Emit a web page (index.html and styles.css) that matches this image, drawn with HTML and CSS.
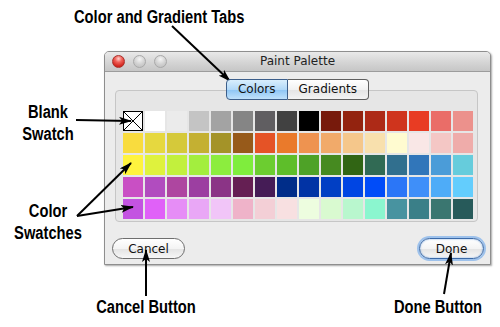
FILE: index.html
```html
<!DOCTYPE html>
<html lang="en">
<head>
    <meta charset="UTF-8">
    <title>Paint Palette</title>
    <link rel="stylesheet" href="styles.css">
</head>
<body>
    <div class="figure">
        <div class="caption caption-top">Color and Gradient Tabs</div>

        <div class="stage">
            <div class="side">
                <div class="caption side-blank">Blank<br>Swatch</div>
                <div class="caption side-colors">Color<br>Swatches</div>
            </div>

            <div class="window">
                <div class="titlebar">
                    <div class="lights">
                        <span class="light red"></span>
                        <span class="light"></span>
                        <span class="light"></span>
                    </div>
                    <div class="title">Paint Palette</div>
                </div>

                <div class="content">
                    <div class="tabs">
                        <span class="tab selected">Colors</span>
                        <span class="tab">Gradients</span>
                    </div>
                    <div class="groupbox">
                        <div class="swatches" id="swatches">
                            <div class="swatch blank">
                                <svg width="20" height="20" viewBox="0 0 20 20">
                                    <rect x="0.5" y="0.5" width="19" height="19" fill="#fff" stroke="#000"/>
                                    <path d="M1 1 L19 19 M19 1 L1 19" stroke="#000" stroke-width="1"/>
                                </svg>
                            </div>
                        </div>
                    </div>
                    <div class="buttons">
                        <button class="btn">Cancel</button>
                        <button class="btn default">Done</button>
                    </div>
                </div>
            </div>
        </div>

        <div class="bottom">
            <div class="caption cancel-label">Cancel Button</div>
            <div class="caption done-label">Done Button</div>
        </div>

        <svg class="arrows" width="500" height="327" viewBox="0 0 500 327">
            <defs>
                <marker id="head" markerWidth="13" markerHeight="8" refX="12" refY="4" orient="auto" markerUnits="userSpaceOnUse">
                    <path d="M0,0 L13,4 L0,8 L3,4 z" fill="#000"/>
                </marker>
            </defs>
            <g stroke="#000" stroke-width="2" marker-end="url(#head)">
                <line x1="172" y1="26" x2="230" y2="81"/>
                <line x1="76" y1="120" x2="131" y2="121"/>
                <line x1="77" y1="216" x2="131" y2="163"/>
                <line x1="77" y1="216" x2="133" y2="207"/>
                <line x1="146" y1="296" x2="146" y2="250"/>
                <line x1="444" y1="294" x2="451" y2="253"/>
            </g>
        </svg>
    </div>

    <script>
        // palette rows, blank swatch is already in the markup
        const colors = [
            '#ffffff', '#ebebeb', '#c4c4c4', '#a3a3a3', '#858585', '#605e61', '#414141',
            '#000000', '#771a0c', '#93230f', '#ad2a17', '#cf341d', '#e83c23', '#ea6d68', '#ec918c',
            '#f9dc3e', '#e6d83f', '#d5c93a', '#c4b032', '#a49328', '#975a1a', '#e55326', '#ea7a2b',
            '#ee9350', '#f1aa6a', '#f5c78b', '#f8e0ad', '#fffbd0', '#f9e7e6', '#f4c7c5', '#efacaa',
            '#fff33e', '#dff23d', '#c2f03d', '#a3ee3e', '#8ced3e', '#7fed3d', '#6ccd30', '#5ebe2a',
            '#4ea227', '#468a20', '#316514', '#316a54', '#316f8e', '#3176ba', '#4b9cd8', '#66ccdc',
            '#c94fc4', '#b14cbf', '#ae46a0', '#9c3fa1', '#8b3486', '#651f53', '#451c56', '#002d89',
            '#0133a5', '#013fc4', '#0045e3', '#004cf9', '#2b76f7', '#3f8ff9', '#4eacf8', '#63cdfd',
            '#c353e1', '#e061f8', '#e68df6', '#e9a7f6', '#f1c5f8', '#efb3c9', '#f3cfd6', '#f8e0e1',
            '#edfddf', '#d9fad0', '#b9f7ce', '#8bf6cf', '#4893a0', '#3a7f88', '#3a7670', '#275a5a'
        ];

        const grid = document.getElementById('swatches');
        colors.forEach(color => {
            const swatch = document.createElement('div');
            swatch.className = 'swatch';
            swatch.style.background = color;
            grid.appendChild(swatch);
        });
    </script>
</body>
</html>
```

FILE: styles.css
```css
body {
    margin: 0;
    background: #fff;
}
.figure {
    position: relative;
    width: 500px;
    height: 327px;
    overflow: hidden;
}
/* Helvetica Condensed look: squeeze Liberation Sans Bold */
.caption {
    font-family: "Liberation Sans", Arial, sans-serif;
    font-weight: bold;
    font-size: 17.5px;
    line-height: 22px;
    color: #000;
    white-space: nowrap;
    transform: scaleX(0.84);
}
.caption-top {
    padding: 6px 0 0 74px;
    height: 22px;
    transform-origin: 74px 0;
}
.stage {
    display: flex;
    margin-top: 23px;
    height: 214px;
}
.side {
    width: 104px;
    padding-right: 8px;
    box-sizing: border-box;
    text-align: center;
}
.side-blank {
    margin-top: 50px;
}
.side-colors {
    margin-top: 55px;
}
.window {
    width: 387px;
    height: 214px;
    box-sizing: border-box;
    border: 1px solid #8e8e8e;
    border-radius: 5px 5px 0 0;
    background: #ececec;
    box-shadow: 1px 1px 2px rgba(0, 0, 0, 0.35);
    font-family: "DejaVu Sans", sans-serif;
    font-size: 12px;
    color: #111;
}
.titlebar {
    position: relative;
    height: 19px;
    border-bottom: 1px solid #9c9c9c;
    border-radius: 4px 4px 0 0;
    background: linear-gradient(#e9e9e9, #d3d3d3 60%, #c6c6c6);
    display: flex;
    align-items: center;
    justify-content: center;
}
.lights {
    position: absolute;
    left: 7px;
    top: 3px;
    display: flex;
    gap: 8px;
}
.light {
    width: 13px;
    height: 13px;
    border-radius: 50%;
    box-sizing: border-box;
    border: 1px solid #a9a9a9;
    background: radial-gradient(circle at 50% 30%, #f4f4f4, #d0d0d0 55%, #bcbcbc);
}
.light.red {
    border-color: #a8312c;
    background: radial-gradient(circle at 50% 25%, #ffd0cb 0, #f0625a 35%, #d2261e 75%, #b81811);
}
.title {
    line-height: 19px;
    color: #222;
}
.content {
    padding: 7px 0 0 10px;
}
.tabs {
    position: relative;
    z-index: 1;
    display: flex;
    justify-content: center;
    margin: 0 0 -10px -10px;
}
.tab {
    height: 21px;
    line-height: 19px;
    padding: 0 11px;
    box-sizing: border-box;
    border: 1px solid #5f5f5f;
    background: linear-gradient(#ffffff, #f2f2f2 50%, #e4e4e4 51%, #f3f3f3);
}
.tab:first-child {
    border-radius: 4px 0 0 4px;
    border-right-color: #8a8a8a;
}
.tab:last-child {
    border-left: 0;
    border-radius: 0 4px 4px 0;
}
.tab.selected {
    border-color: #3c5e8a;
    background: linear-gradient(#d9eefd, #b1d8f8 50%, #8cc4f4 51%, #bfe1fb);
}
.groupbox {
    width: 363px;
    box-sizing: border-box;
    border: 1px solid #c6c6c6;
    border-radius: 4px;
    background: #e6e6e6;
    padding: 20px 0 2px 7px;
}
.swatches {
    display: grid;
    grid-template-columns: repeat(16, 20px);
    grid-auto-rows: 20px;
    gap: 2px;
}
.swatch {
    width: 20px;
    height: 20px;
}
.swatch svg {
    display: block;
}
.buttons {
    display: flex;
    justify-content: space-between;
    margin: 16px 6px 0 -3px;
}
.btn {
    height: 21px;
    padding: 0;
    border: 1px solid #6e6e6e;
    border-radius: 11px;
    background: linear-gradient(#ffffff, #f4f4f4 50%, #e3e3e3 51%, #f7f7f7);
    font-family: "DejaVu Sans", sans-serif;
    font-size: 12px;
    color: #111;
    width: 73px;
}
.btn.default {
    width: 65px;
    border-color: #3b6aa8;
    box-shadow: 0 0 0 2px #9ec2ec, inset 0 0 2px #7aa6dc;
}
.bottom {
    display: grid;
    grid-template-columns: 81px 130px 1fr 120px 2px;
    margin-top: 31px;
    text-align: center;
}
.cancel-label {
    grid-column: 2;
}
.done-label {
    grid-column: 4;
}
.arrows {
    position: absolute;
    left: 0;
    top: 0;
    pointer-events: none;
}
```
